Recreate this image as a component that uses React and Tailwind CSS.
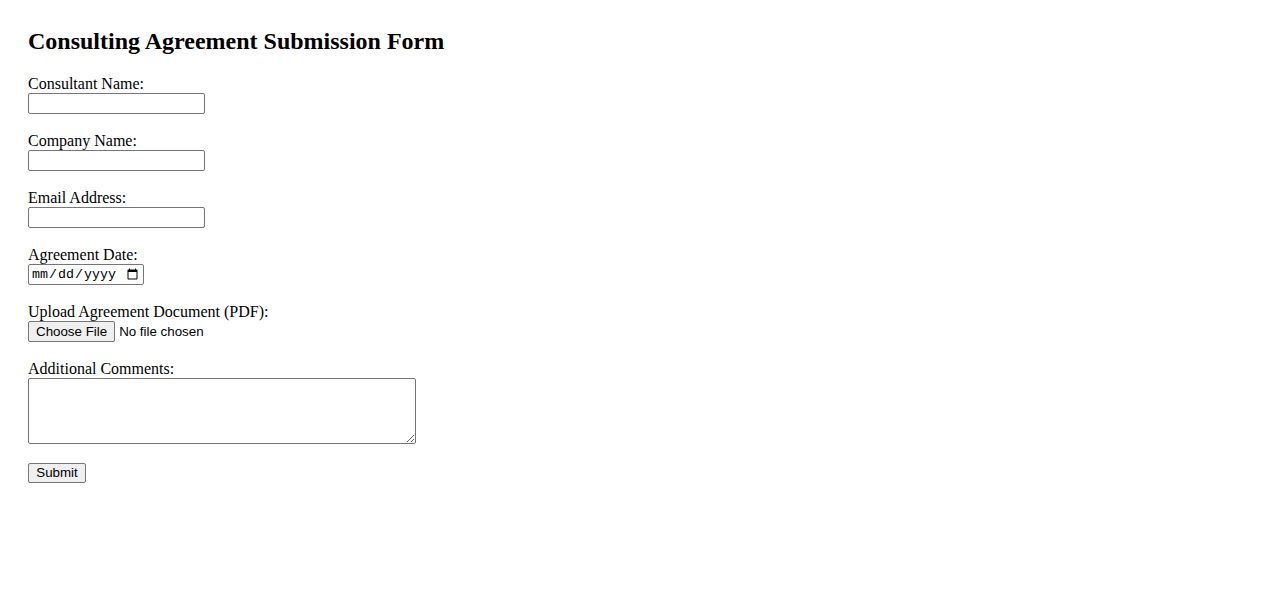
import React from 'react';

const fieldClass =
  "block w-[177px] h-[21px] border border-[#767676] rounded-[2px] px-[2px] bg-white text-[13.33px] font-['Liberation_Sans',Arial,sans-serif] outline-none";

const TextField = ({ id, label, type = 'text' }) => (
  <div className="flex flex-col items-start mb-[18px]">
    <label htmlFor={id} className="leading-[18px]">{label}</label>
    <input id={id} name={id} type={type} className={fieldClass} />
  </div>
);

const App = () => {
  return (
    <div className="min-h-screen bg-white text-black font-['Liberation_Serif','Times_New_Roman',serif] text-[16px] px-[28px] pt-[28px]">
      <h2 className="text-[24px] font-bold leading-[27px] mb-[20px]">
        Consulting Agreement Submission Form
      </h2>

      <form onSubmit={(e) => e.preventDefault()}>
        <TextField id="consultant" label="Consultant Name:" />
        <TextField id="company" label="Company Name:" />
        <TextField id="email" label="Email Address:" type="email" />

        <div className="flex flex-col items-start mb-[18px]">
          <label htmlFor="date" className="leading-[18px]">Agreement Date:</label>
          <input
            id="date"
            type="date"
            className="block w-[116px] h-[21px] border border-[#767676] rounded-[2px] px-[2px] bg-white text-[13.33px] font-['Liberation_Mono',monospace] outline-none"
          />
        </div>

        <div className="flex flex-col items-start mb-[18px]">
          <label htmlFor="doc" className="leading-[18px]">Upload Agreement Document (PDF):</label>
          <input
            id="doc"
            type="file"
            accept="application/pdf"
            className="block h-[21px] text-[13.33px] leading-[19px] font-['Liberation_Sans',Arial,sans-serif] file:h-[21px] file:px-[7px] file:mr-[4px] file:bg-[#efefef] file:border file:border-solid file:border-[#767676] file:rounded-[2px] file:text-black"
          />
        </div>

        <div className="flex flex-col items-start mb-[19px]">
          <label htmlFor="comments" className="leading-[18px]">Additional Comments:</label>
          <textarea
            id="comments"
            className="block w-[388px] h-[66px] border border-[#767676] rounded-[2px] p-[2px] bg-white text-[13.33px] font-['Liberation_Mono',monospace] outline-none"
          />
        </div>

        <button
          type="submit"
          className="block w-[58px] h-[20px] bg-[#efefef] border border-[#767676] rounded-[2px] text-[13.33px] leading-[16px] font-['Liberation_Sans',Arial,sans-serif]"
        >
          Submit
        </button>
      </form>
    </div>
  );
};

export default App;
